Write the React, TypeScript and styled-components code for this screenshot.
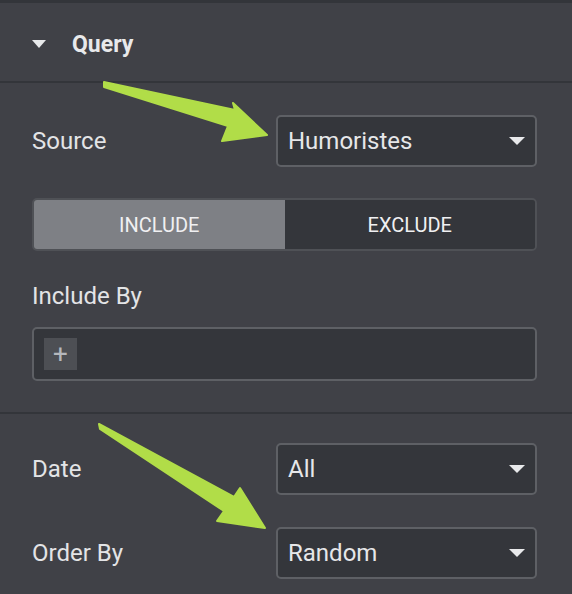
import React from "react";
import styled, { createGlobalStyle } from "styled-components";

const GlobalStyle = createGlobalStyle`
  html, body {
    margin: 0;
    padding: 0;
    background: #404147;
  }
  body {
    font-family: Roboto, "Liberation Sans", sans-serif;
  }
`;

const Panel = styled.div`
  position: relative;
  width: 572px;
  height: 594px;
  overflow: hidden;
  background: #404147;
  border-top: 3px solid #33353a;
  box-sizing: border-box;
  color: #e6e7e9;
`;

const Header = styled.div`
  display: flex;
  align-items: center;
  gap: 26px;
  height: 80px;
  padding-left: 32px;
  padding-top: 4px;
  box-sizing: border-box;
  border-bottom: 2px solid #33353a;
  font-size: 23px;
  font-weight: 700;
  color: #e8e9eb;
`;

const Caret = styled.span<{ $w: number; $h: number }>`
  flex-shrink: 0;
  width: 0;
  height: 0;
  border-left: ${(p) => p.$w / 2}px solid transparent;
  border-right: ${(p) => p.$w / 2}px solid transparent;
  border-top: ${(p) => p.$h}px solid #e8e9eb;
`;

const Section = styled.div<{ $top: number; $bottom: number; $gap: number }>`
  display: flex;
  flex-direction: column;
  gap: ${(p) => p.$gap}px;
  padding: ${(p) => p.$top}px 35px ${(p) => p.$bottom}px 32px;
  border-bottom: 2px solid #33353a;
  &:last-child {
    border-bottom: none;
  }
`;

const Row = styled.div`
  display: flex;
  align-items: center;
  justify-content: space-between;
`;

const Label = styled.div`
  font-size: 24px;
  line-height: 28px;
  color: #e3e4e6;
`;

const Select = styled.div`
  display: flex;
  align-items: center;
  justify-content: space-between;
  width: 261px;
  height: 52px;
  box-sizing: border-box;
  padding: 0 10px 0 10px;
  background: #34363b;
  border: 2px solid #5e6065;
  border-radius: 5px;
  font-size: 24px;
  color: #e6e7e9;
`;

const Toggle = styled.div`
  display: flex;
  height: 53px;
  border: 2px solid #4f5156;
  border-radius: 5px;
  overflow: hidden;
  box-sizing: border-box;
`;

const ToggleButton = styled.div<{ $active?: boolean }>`
  flex: 1;
  display: flex;
  align-items: center;
  justify-content: center;
  background: ${(p) => (p.$active ? "#7e8085" : "#34363b")};
  color: #f0f0f2;
  font-size: 20px;
  font-weight: 400;
`;

const Field = styled.div`
  display: flex;
  flex-direction: column;
  gap: 17px;
`;

const MultiInput = styled.div`
  display: flex;
  align-items: center;
  height: 54px;
  box-sizing: border-box;
  padding: 0 10px;
  background: #34363b;
  border: 2px solid #5e6065;
  border-radius: 5px;
`;

const AddButton = styled.div`
  width: 33px;
  height: 32px;
  display: flex;
  align-items: center;
  justify-content: center;
  background: #4d4f54;
  color: #b5b8bd;
  font-size: 26px;
  line-height: 1;
`;

const Arrows = styled.svg`
  position: absolute;
  left: 0;
  top: 0;
  pointer-events: none;
`;

const SelectField = ({ label, value }: { label: string; value: string }) => (
  <Row>
    <Label>{label}</Label>
    <Select>
      <span>{value}</span>
      <Caret $w={16} $h={8} />
    </Select>
  </Row>
);

const App: React.FC = () => {
  return (
    <>
      <GlobalStyle />
      <Panel>
        <Header>
          <Caret $w={15} $h={8} />
          <span>Query</span>
        </Header>

        <Section $top={32} $bottom={31} $gap={31}>
          <SelectField label="Source" value="Humoristes" />
          <Toggle>
            <ToggleButton $active>INCLUDE</ToggleButton>
            <ToggleButton>EXCLUDE</ToggleButton>
          </Toggle>
          <Field>
            <Label>Include By</Label>
            <MultiInput>
              <AddButton>+</AddButton>
            </MultiInput>
          </Field>
        </Section>

        <Section $top={29} $bottom={15} $gap={32}>
          <SelectField label="Date" value="All" />
          <SelectField label="Order By" value="Random" />
        </Section>

        {/* annotation arrows */}
        <Arrows width="572" height="594" viewBox="0 0 572 594">
          <g fill="#b1dd48" stroke="#b1dd48" strokeWidth="2" strokeLinejoin="round">
            <polygon points="104,79 235,107 233,100 267,132 222,138 228,123 104,84" />
            <polygon points="99,421 234,494 240,485 265,525 217,518 224,508 100,426" />
          </g>
        </Arrows>
      </Panel>
    </>
  );
};

export default App;
